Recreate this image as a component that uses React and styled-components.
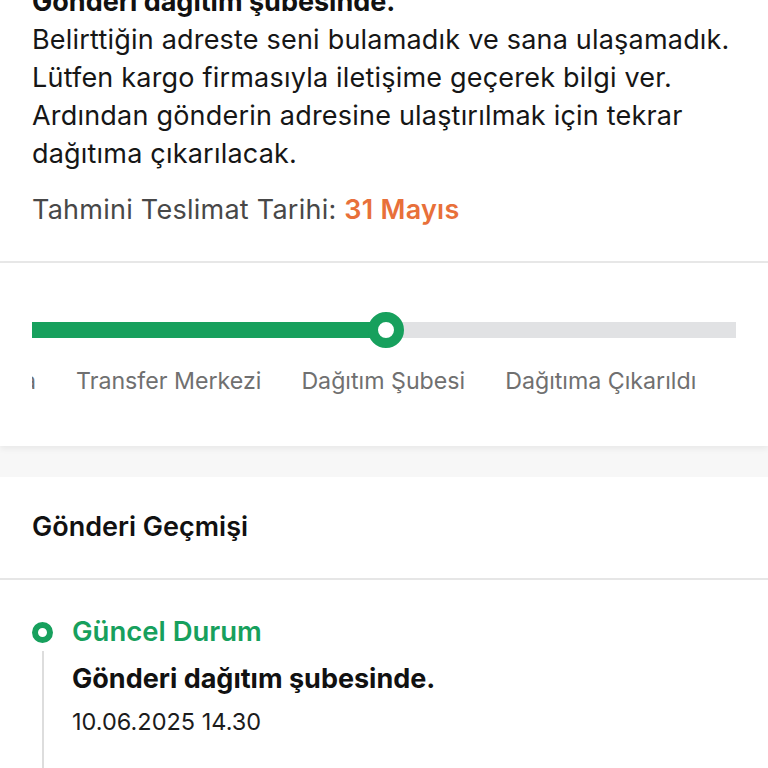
import React from 'react';
import styled, { createGlobalStyle } from 'styled-components';

const GlobalStyle = createGlobalStyle`
  html, body {
    margin: 0;
    padding: 0;
    background: #ffffff;
    font-family: Inter, "Noto Sans", "Liberation Sans", sans-serif;
    color: #111111;
    overflow: hidden;
  }
  * {
    box-sizing: border-box;
  }
`;

const steps = ['Yolda', 'Transfer Merkezi', 'Dağıtım Şubesi', 'Dağıtıma Çıkarıldı'];

const history = [
  {
    status: 'Güncel Durum',
    message: 'Gönderi dağıtım şubesinde.',
    date: '10.06.2025 14.30',
  },
];

export default function App() {
  const progress = 354;

  return (
    <>
      <GlobalStyle />
      <Page>
        <Summary>
          <Title>Gönderi dağıtım şubesinde.</Title>
          <Message>
            Belirttiğin adreste seni bulamadık ve sana ulaşamadık. Lütfen kargo
            firmasıyla iletişime geçerek bilgi ver. Ardından gönderin adresine
            ulaştırılmak için tekrar dağıtıma çıkarılacak.
          </Message>
          <Estimate>
            Tahmini Teslimat Tarihi: <strong>31 Mayıs</strong>
          </Estimate>
        </Summary>

        <ProgressCard>
          <Track>
            <Fill style={{ width: progress }} />
            <Knob style={{ left: progress }} />
          </Track>
          <Labels>
            {steps.map((step, i) =>
              i === 0 ? (
                <Clipped key={step}>
                  <span>{step}</span>
                </Clipped>
              ) : (
                <Label key={step}>{step}</Label>
              )
            )}
          </Labels>
        </ProgressCard>

        <Band />

        <History>
          <HistoryHeader>Gönderi Geçmişi</HistoryHeader>
          <Timeline>
            {history.map((item) => (
              <Entry key={item.date}>
                <Rail>
                  <Dot />
                  <Line />
                </Rail>
                <EntryBody>
                  <Status>{item.status}</Status>
                  <EntryText>{item.message}</EntryText>
                  <EntryDate>{item.date}</EntryDate>
                </EntryBody>
              </Entry>
            ))}
          </Timeline>
        </History>
      </Page>
    </>
  );
}

const Page = styled.main`
  margin-top: -17px;
  display: flex;
  flex-direction: column;
`;

const Summary = styled.section`
  padding: 0 32px 32px;
  border-bottom: 2px solid #e8e8e8;
`;

const Title = styled.h1`
  margin: 0;
  font-size: 27px;
  font-weight: 700;
  line-height: 38px;
`;

const Message = styled.p`
  margin: 0;
  font-size: 27px;
  letter-spacing: 0.2px;
  line-height: 38px;
  color: #161616;
`;

const Estimate = styled.p`
  margin: 18px 0 0;
  font-size: 27px;
  letter-spacing: 0.25px;
  line-height: 38px;
  color: #484848;

  strong {
    color: #e8703a;
    font-weight: 600;
  }
`;

const ProgressCard = styled.section`
  padding: 59px 32px 50px;
  background: #ffffff;
  box-shadow: 0 3px 6px rgba(0, 0, 0, 0.06);
  position: relative;
  z-index: 1;
`;

const Track = styled.div`
  position: relative;
  height: 16px;
  background: #e1e2e4;
`;

const Fill = styled.div`
  height: 100%;
  background: #17a05d;
`;

const Knob = styled.span`
  position: absolute;
  top: 50%;
  width: 36px;
  height: 36px;
  border-radius: 50%;
  border: 10px solid #17a05d;
  background: #ffffff;
  transform: translate(-50%, -50%);
`;

const Labels = styled.div`
  display: flex;
  gap: 40px;
  margin-top: 28px;
  overflow: hidden;
  white-space: nowrap;
`;

const Label = styled.span`
  flex: none;
  font-size: 23.2px;
  line-height: 30px;
  color: #707070;
`;

const Clipped = styled(Label)`
  flex: 0 0 4px;
  display: flex;
  justify-content: flex-end;
  overflow: hidden;
`;

const Band = styled.div`
  height: 31px;
  background: #f7f7f7;
`;

const History = styled.section`
  background: #ffffff;
  min-height: 320px;
`;

const HistoryHeader = styled.h2`
  margin: 0;
  padding: 34px 32px 35px;
  font-size: 27px;
  font-weight: 600;
  line-height: 32px;
  border-bottom: 2px solid #e6e6e6;
`;

const Timeline = styled.ol`
  list-style: none;
  margin: 0;
  padding: 35px 32px 0;
`;

const Entry = styled.li`
  display: flex;
  gap: 19px;
  min-height: 200px;
`;

const Rail = styled.div`
  flex: 0 0 21px;
  display: flex;
  flex-direction: column;
  align-items: center;
`;

const Dot = styled.span`
  margin-top: 7px;
  width: 21px;
  height: 21px;
  border-radius: 50%;
  border: 6.5px solid #17a05d;
`;

const Line = styled.span`
  flex: 1;
  width: 2px;
  margin-top: 8px;
  background: #dddddd;
`;

const EntryBody = styled.div`
  display: flex;
  flex-direction: column;
`;

const Status = styled.div`
  font-size: 27.5px;
  font-weight: 600;
  line-height: 32px;
  color: #17a05d;
`;

const EntryText = styled.div`
  margin-top: 16px;
  font-size: 27px;
  font-weight: 700;
  line-height: 32px;
`;

const EntryDate = styled.div`
  margin-top: 12px;
  font-size: 23.5px;
  line-height: 30px;
  color: #1c1c1c;
`;
